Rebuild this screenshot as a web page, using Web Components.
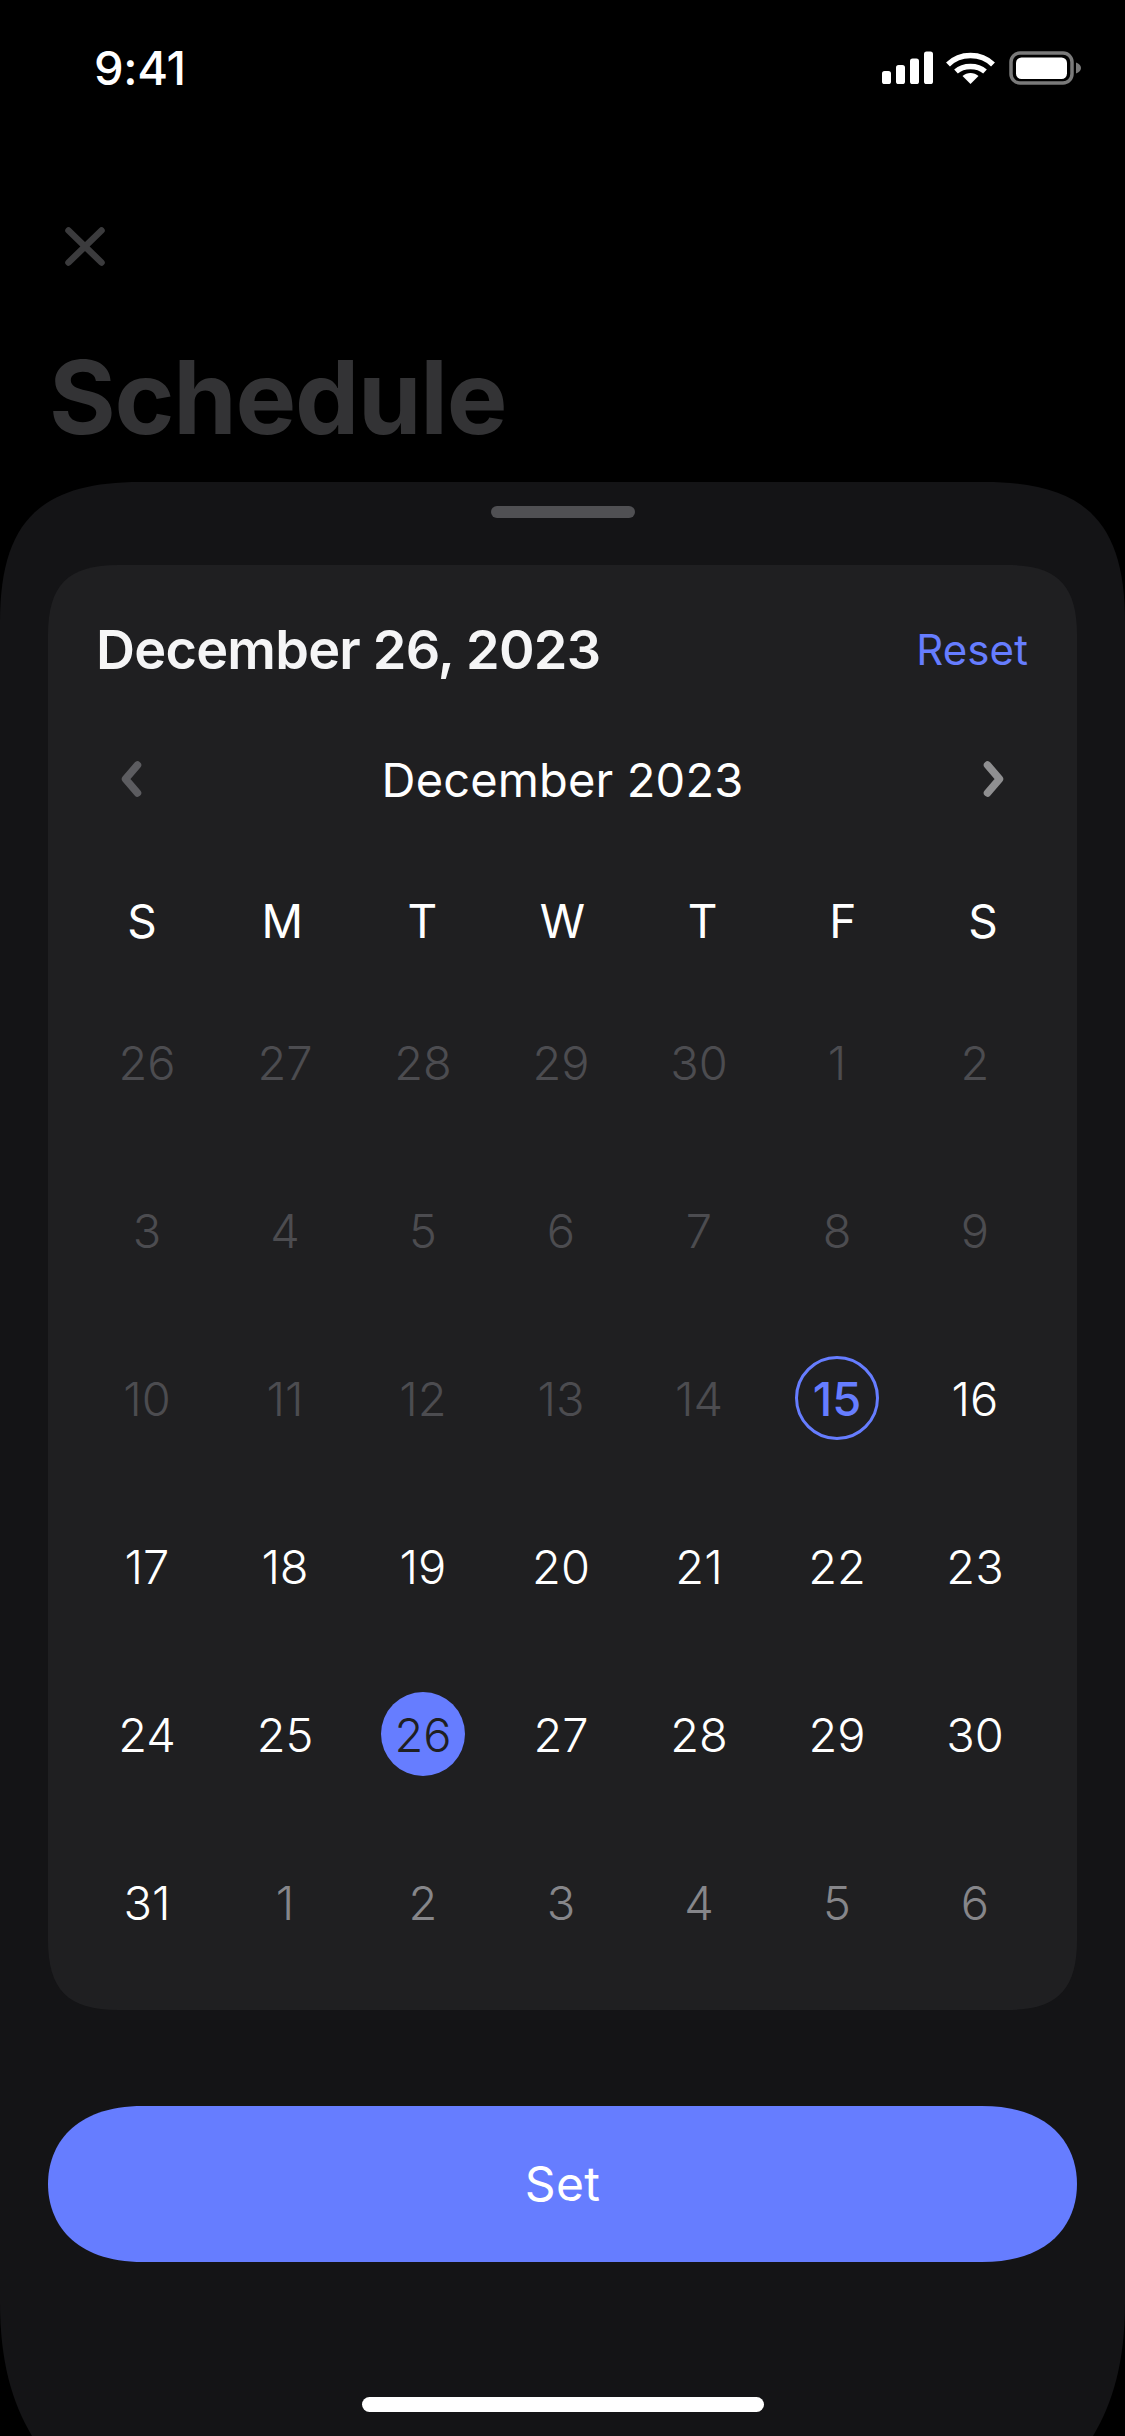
<!DOCTYPE html>
<html><head><meta charset="utf-8"><title>Schedule</title>
<style>
html,body{margin:0;padding:0;background:#000;}
body{width:1125px;height:2436px;overflow:hidden;font-family:Inter,"Noto Sans",sans-serif;color:#fff;display:flex;flex-direction:column;}
</style></head><body>
<status-bar>9:41</status-bar>
<page-header>Schedule</page-header>
<bottom-sheet>
  <calendar-card heading="December 26, 2023" action="Reset" month="December 2023"></calendar-card>
  <primary-button>Set</primary-button>
</bottom-sheet>
<script>
class Base extends HTMLElement{
  render(html){ if(!this.shadowRoot) this.attachShadow({mode:'open'}); this.shadowRoot.innerHTML=html; }
}
customElements.define('status-bar',class extends Base{connectedCallback(){this.render(`<style>
:host{display:flex;align-items:center;justify-content:space-between;height:136px;flex:none;box-sizing:border-box;padding:0 44px 0 94px;}
.t{font:500 47px/56px Inter,sans-serif;letter-spacing:-.3px;color:#fff}
svg{display:block}
</style><span class="t"><slot></slot></span>
<svg width="199" height="34" viewBox="0 0 199 34" aria-hidden="true">
<rect x="0" y="20" width="9" height="13" rx="2.6" fill="#fff"/><rect x="14" y="14" width="9" height="19" rx="2.6" fill="#fff"/><rect x="28" y="7.500" width="9" height="25.500" rx="2.6" fill="#fff"/><rect x="42" y="0.500" width="9" height="32.500" rx="2.6" fill="#fff"/>
<path d="M66 13.500C78 1.500 99 1.500 111 13.500" fill="none" stroke="#fff" stroke-width="5.500"/>
<path d="M74 20.500C81.500 13.800 95.500 13.800 103 20.500" fill="none" stroke="#fff" stroke-width="5.500"/>
<path d="M88.500 33L80.500 25C85 21 92 21 96.500 25Z" fill="#fff"/>
<rect x="129" y="2" width="61" height="30" rx="9" fill="none" stroke="#7a7a7a" stroke-width="3.500"/>
<rect x="134" y="6.500" width="51" height="21.500" rx="5.500" fill="#fff"/>
<path d="M194 11.500C197 12.500 199 14.500 199 17C199 19.500 197 21.500 194 22.500Z" fill="#7a7a7a"/>
</svg>`)}});
customElements.define('page-header',class extends Base{connectedCallback(){this.render(`<style>
:host{display:flex;flex-direction:column;align-items:flex-start;flex:none;height:346px;box-sizing:border-box;padding:91px 0 0 49px;}
svg{display:block;margin-left:16px}
h1{margin:73px 0 0;font:700 102px/116px Inter,sans-serif;letter-spacing:-1.25px;color:#333335}
</style><svg width="40" height="39" viewBox="0 0 40 39" aria-hidden="true"><path d="M3.500 3.500L36.500 35.500M36.500 3.500L3.500 35.500" stroke="#3b3b3d" stroke-width="6.500" stroke-linecap="round" fill="none"/></svg>
<h1><slot></slot></h1>`)}});
customElements.define('bottom-sheet',class extends Base{connectedCallback(){this.render(`<style>
:host{display:flex;flex-direction:column;align-items:stretch;flex:1;box-sizing:border-box;padding:24px 48px 0;background:#141416;
clip-path:path('M140 0H985C1085 0 1125 40 1125 140V1820C1125 1880 1113 1920 1093 1954H32C12 1920 0 1880 0 1820V140C0 40 40 0 140 0Z');}
.h{width:144px;height:12px;border-radius:6px;background:#505053;align-self:center;margin-bottom:47px}
.i{width:402px;height:15px;border-radius:8px;background:#fff;align-self:center;margin-top:135px}
</style><div class="h"></div><slot></slot><div class="i"></div>`)}});
customElements.define('calendar-card',class extends Base{connectedCallback(){
 const wd=['S','M','T','W','T','F','S'].map(d=>`<span>${d}</span>`).join('');
 const rows=[[26,27,28,29,30,1,2],[3,4,5,6,7,8,9],[10,11,12,13,14,15,16],[17,18,19,20,21,22,23],[24,25,26,27,28,29,30],[31,1,2,3,4,5,6]];
 let cells='';
 rows.forEach((r,ri)=>r.forEach((n,ci)=>{
   let k='off';
   if(ri===2&&ci===6||ri===3||ri===4||(ri===5&&ci===0))k='on';
   if(ri===5&&ci>0)k='next';
   if(ri===2&&ci===5)k='today';
   if(ri===4&&ci===2)k='sel';
   cells+=`<calendar-day kind="${k}">${n}</calendar-day>`;
 }));
 this.render(`<style>
:host{display:flex;flex-direction:column;flex:none;box-sizing:border-box;height:1445px;background:#1f1f21;
clip-path:path('M70 0H959C1009 0 1029 20 1029 70V1375C1029 1425 1009 1445 959 1445H70C20 1445 0 1425 0 1375V70C0 20 20 0 70 0Z');}
.top{display:flex;justify-content:space-between;align-items:center;padding:52px 49px 0 48px;height:66px}
h2{margin:0;font:600 54px/66px Inter,sans-serif;color:#f5f5f6;letter-spacing:-.75px}
.r{font:430 42px/66px Inter,sans-serif;color:#667dff;letter-spacing:.1px}
.mon{display:flex;justify-content:space-between;align-items:center;padding:0 70px;margin-top:67px;height:60px}
.m{font:420 47px/60px Inter,sans-serif;color:#fff;letter-spacing:.15px}
svg{display:block}
.wd{display:grid;grid-template-columns:repeat(7,1fr);padding:0 24px;margin-top:81px;height:60px;align-items:center;text-align:center;font:400 46px/60px Inter,sans-serif;color:#fff}
.g{display:grid;grid-template-columns:repeat(7,138px);grid-auto-rows:168px;padding:0 30px;margin-top:27px}
</style>
<div class="top"><h2>${this.getAttribute('heading')}</h2><span class="r">${this.getAttribute('action')}</span></div>
<div class="mon"><svg width="24" height="40" viewBox="0 0 24 40" aria-hidden="true"><path d="M19.500 5L7.500 19L19.500 33" fill="none" stroke="#5c5c60" stroke-width="7.500" stroke-linecap="round" stroke-linejoin="round"/></svg>
<span class="m">${this.getAttribute('month')}</span>
<svg width="24" height="40" viewBox="0 0 24 40" aria-hidden="true"><path d="M4.500 5L16.500 19L4.500 33" fill="none" stroke="#8f8f91" stroke-width="7.500" stroke-linecap="round" stroke-linejoin="round"/></svg></div>
<div class="wd">${wd}</div>
<div class="g">${cells}</div>`)}});
customElements.define('calendar-day',class extends Base{connectedCallback(){this.render(`<style>
:host{display:flex;align-items:center;justify-content:center;font:360 47px/1 Inter,sans-serif;}
span{display:flex;align-items:center;justify-content:center;width:84px;height:84px;border-radius:50%;box-sizing:border-box}
:host([kind=off]) span{color:#4c4c50}
:host([kind=on]) span{color:#fff}
:host([kind=next]) span{color:#86868a}
:host([kind=today]) span{color:#667dff;border:3px solid #667dff;font-weight:450}
:host([kind=sel]) span{background:#667dff;color:#1f1f21}
</style><span><slot></slot></span>`)}});
customElements.define('primary-button',class extends Base{connectedCallback(){this.render(`<style>
:host{display:flex;align-items:center;justify-content:center;flex:none;height:156px;margin-top:96px;background:#667dff;color:#fff;font:420 48px/1 Inter,sans-serif;letter-spacing:.3px;
clip-path:path('M95 0H934C1004 0 1029 40 1029 78C1029 116 1004 156 934 156H95C25 156 0 116 0 78C0 40 25 0 95 0Z');}
</style><slot></slot>`)}});
</script>
</body></html>
